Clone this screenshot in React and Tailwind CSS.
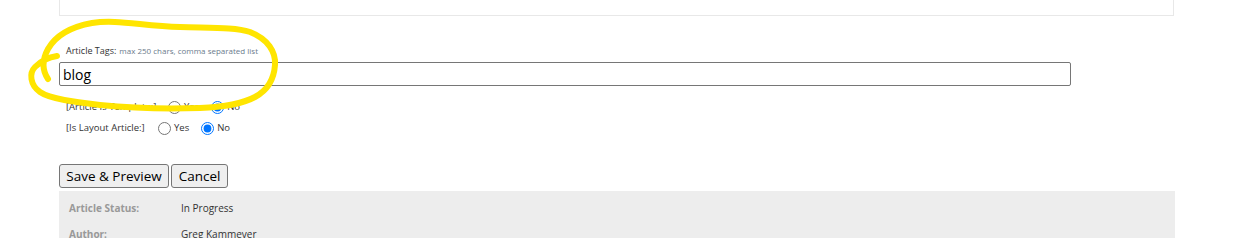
import React from "react";

// Hand-drawn highlight ring around the tags field
function Scribble() {
  return (
    <svg
      className="absolute inset-0 pointer-events-none"
      width="1233"
      height="238"
      viewBox="0 0 1233 238"
    >
      <path
        d="M48 79 C42 70 42 60 48 49 C56 35 70 27 92 23 C117 19 142 26 180 27 C210 28 235 27 250 32 C268 39 276 52 275 65 C274 79 268 90 255 97 C242 104 225 107 200 108 C170 109 130 108 100 105 C75 102 50 99 40 92 C30 85 29 73 35 67 C41 61 50 57 57 56"
        fill="none"
        stroke="#ffe500"
        strokeWidth="6"
        strokeLinecap="round"
        strokeLinejoin="round"
      />
    </svg>
  );
}

function RadioRow({ label, name, labelWidth }) {
  return (
    <div className="flex items-center h-[21px] pl-[7px] text-[9.5px] text-[#333]">
      <span className={labelWidth}>{label}</span>
      <input
        type="radio"
        name={name}
        className="w-[13px] h-[13px] m-0 accent-[#0075ff]"
      />
      <span className="ml-[3px] mr-[12px]">Yes</span>
      <input
        type="radio"
        name={name}
        defaultChecked
        className="w-[13px] h-[13px] m-0 accent-[#0075ff]"
      />
      <span className="ml-[3px]">No</span>
    </div>
  );
}

export default function App() {
  const [tags, setTags] = React.useState("blog");

  return (
    <div className="relative w-[1233px] h-[238px] overflow-hidden bg-white font-['Open_Sans',sans-serif]">
      {/* Panel above (cut off) */}
      <div className="ml-[59px] w-[1115px] h-[16px] border-x border-b border-[#e8e8e8]" />

      <div className="pl-[59px]">
        {/* Article Tags */}
        <div className="mt-[28px] mb-[4px] ml-[7px] h-[14px] flex items-center">
          <span className="text-[9px] text-[#333]">Article Tags:</span>
          <span className="ml-[3px] text-[8px] text-[#6b7b8c]">
            max 250 chars, comma separated list
          </span>
        </div>
        <input
          type="text"
          value={tags}
          onChange={(e) => setTags(e.target.value)}
          className="block w-[1012px] h-[24px] px-[3px] border border-[#767676] rounded-[2px] text-[14px] text-black outline-none"
        />

        {/* Options */}
        <div className="mt-[11px]">
          <RadioRow label="[Article Is Template:]" name="template" labelWidth="w-[102px]" />
          <RadioRow label="[Is Layout Article:]" name="layout" labelWidth="w-[92px]" />
        </div>

        {/* Buttons */}
        <div className="mt-[25px] flex gap-[2px]">
          <button className="h-[24px] w-[110px] bg-[#efefef] border border-[#767676] rounded-[3px] text-[13.5px] text-black">
            Save &amp; Preview
          </button>
          <button className="h-[24px] w-[57px] bg-[#efefef] border border-[#767676] rounded-[3px] text-[13.5px] text-black">
            Cancel
          </button>
        </div>

        {/* Article info */}
        <div className="mt-[3px] w-[1116px] bg-[#ededed] pt-[4px] pl-[10px] text-[10px]">
          <div className="flex items-center h-[26px]">
            <span className="w-[112px] font-bold text-[#999]">Article Status:</span>
            <span className="text-[#333]">In Progress</span>
          </div>
          <div className="flex items-center h-[26px]">
            <span className="w-[112px] font-bold text-[#999]">Author:</span>
            <span className="text-[#333]">Greg Kammeyer</span>
          </div>
        </div>
      </div>

      <Scribble />
    </div>
  );
}
